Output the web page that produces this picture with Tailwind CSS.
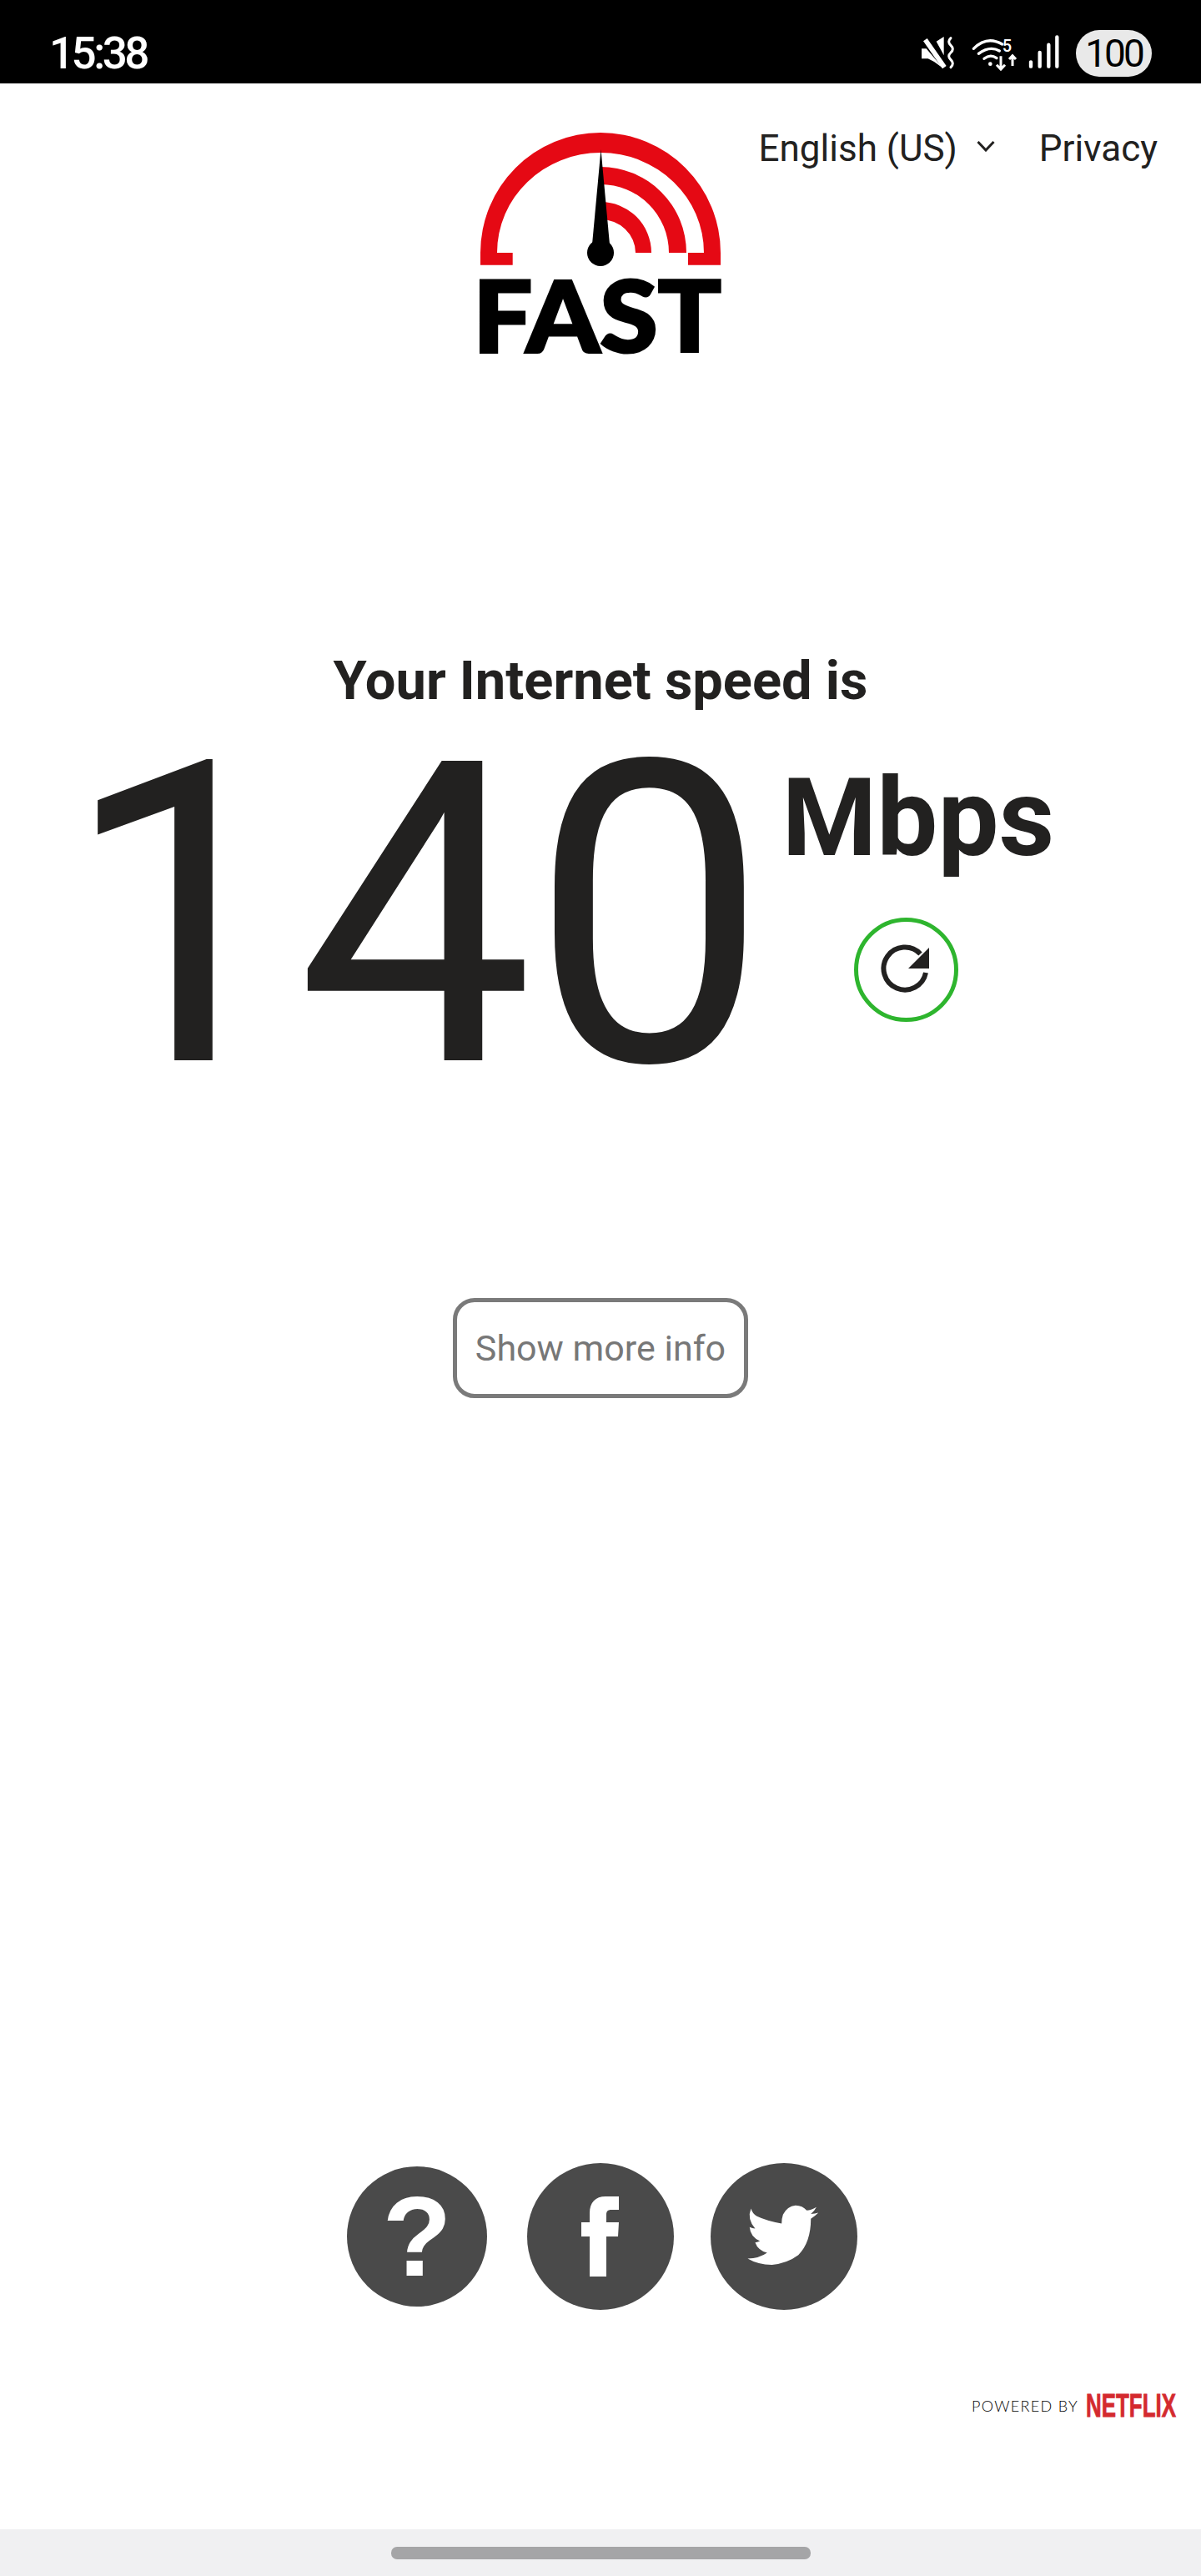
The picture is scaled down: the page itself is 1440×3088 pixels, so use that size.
<!doctype html>
<html lang="en">
<head>
<meta charset="utf-8">
<title>Fast.com</title>
<script src="https://cdn.jsdelivr.net/npm/@tailwindcss/browser@4"></script>
</head>
<body class="bg-white font-['Roboto',sans-serif] text-[#222120]">
<div class="flex h-[3088px] w-[1440px] flex-col overflow-hidden">
  <!-- status bar -->
  <div class="flex h-[100px] items-center justify-between bg-black pl-[59px] pr-[59px] pt-[28px] text-white">
    <span class="text-[53px] font-medium leading-none tracking-[-3.5px]">15:38</span>
    <div class="flex items-center gap-[10px]">
      <svg width="190" height="70" viewBox="0 0 570 210" fill="none">
        <path d="M98 62 L125 45 V112 Z M45 88 H62 L122 158 L90 135 L68 124 H45 Z" fill="#fff"/>
        <path d="M58 56 L127 155" stroke="#fff" stroke-width="17"/>
        <path d="M150 50 q-14 13 0 26 q14 13 0 26 q-14 13 0 26 q14 13 0 27" stroke="#fff" stroke-width="9" stroke-linecap="round"/>
        <path d="M232 88 Q280 40 335 72 M250 106 Q290 76 325 96 M270 124 Q292 106 315 122" stroke="#fff" stroke-width="10" stroke-linecap="round"/>
        <circle cx="292" cy="143" r="7" fill="#fff"/>
        <text x="335" y="98" fill="#fff" font-size="60" font-weight="500">5</text>
        <path d="M330 115 V160 M315 146 L330 162 L345 146 M372 150 V115 M360 126 L372 113 L384 126" stroke="#fff" stroke-width="9"/>
        <path d="M438 136 V152 M470 102 V152 M502 74 V152 M532 46 V152" stroke="#fff" stroke-width="13" stroke-linecap="round"/>
      </svg>
      <div class="flex h-[56px] w-[91px] items-center justify-center rounded-full bg-[#e9e9e9] text-[46px] leading-none tracking-[-3px] text-black">100</div>
    </div>
  </div>

  <!-- header -->
  <div class="grid grid-cols-[1fr_320px_1fr] items-start">
    <div></div>
    <svg width="320" height="290" viewBox="0 0 320 290" class="mt-[50px] overflow-visible">
      <path fill="#e50914" d="M16 167.700 V153 A144 144 0 0 1 304 153 V167.700 H265 V153 H284 A124 120 0 0 0 36 153 H54.700 V167.700 Z"/>
      <path fill="#e50914" d="M160 50 A103 103 0 0 1 263 153 H242 A82 82 0 0 0 160 71 Z"/>
      <path fill="#e50914" d="M160 92 A61 61 0 0 1 221 153 H202 A42 40 0 0 0 160 113 Z"/>
      <path fill="#000" d="M160.500 29 L171 143 H150 Z"/>
      <circle cx="160" cy="153" r="16" fill="#000"/>
      <text x="7" y="272" textLength="298" lengthAdjust="spacingAndGlyphs" font-family="Lato" font-weight="900" font-size="118" fill="#000" stroke="#000" stroke-width="3">FAST</text>
    </svg>
    <div class="flex items-center justify-end pr-[52px] pt-[38px] text-[44px] leading-[80px]">
      <span>English (US)</span>
      <svg width="22" height="14" viewBox="0 0 22 14" fill="none" class="mb-[6px] ml-[23px]"><path d="M1.500 2 L11 12 L20.500 2" stroke="#222120" stroke-width="3"/></svg>
      <span class="ml-[53px]">Privacy</span>
    </div>
  </div>

  <!-- result -->
  <div class="mt-[336px] text-center text-[65px] font-bold leading-[80px]">Your Internet speed is</div>
  <div class="mt-[32px] flex items-start pl-[75px]">
    <div class="text-[505px] font-normal leading-[420px] tracking-[-3px]">140</div>
    <div class="ml-[20px] flex flex-col items-center">
      <div class="mt-[18px] text-[130px] font-bold leading-[150px]">Mbps</div>
      <button class="mr-[28px] mt-[44px] flex h-[125px] w-[125px] items-center justify-center rounded-full border-[5px] border-[#2eb52e]">
        <svg width="62" height="62" viewBox="0 0 62 62" fill="none">
          <path d="M47.500 11.500 A25.500 25.500 0 1 0 54 34" stroke="#222120" stroke-width="6"/>
          <path d="M58 4 V29 H33 Z" fill="#222120"/>
        </svg>
      </button>
    </div>
  </div>

  <!-- more info -->
  <button class="mx-auto mt-[248px] flex h-[120px] w-[354px] items-center justify-center rounded-[26px] border-[5px] border-[#7a7a7a] text-[43px] text-[#777]">Show more info</button>

  <!-- share -->
  <div class="mt-auto flex items-center justify-center pl-[4px]">
    <div class="flex h-[168px] w-[168px] items-center justify-center rounded-full bg-[#4a4a4a] font-['Liberation_Sans',sans-serif] text-[136px] font-bold leading-none text-white">?</div>
    <div class="ml-[48px] flex h-[176px] w-[176px] items-center justify-center rounded-full bg-[#4a4a4a]">
      <svg width="46" height="96" viewBox="0 0 46 96"><path fill="#fff" d="M45 0 V16 H36 C31.500 16 30 18 30 22 V31 H45 L44 48 H30 V96 H10 V48 H0 V31 H10 V20 C10 7 17 0 29 0 Z"/></svg>
    </div>
    <div class="ml-[44px] flex h-[176px] w-[176px] items-center justify-center rounded-full bg-[#4a4a4a]">
      <svg width="176" height="176" viewBox="5 5 527 527"><path fill="#fff" d="M385 163 Q365 175 350 175 Q335 157 310 157 Q280 160 265 190 Q260 205 260 222 Q205 212 170 195 Q155 185 150 168 Q135 205 165 240 Q155 240 145 235 Q148 270 182 285 Q175 288 165 290 Q175 318 208 327 Q180 347 138 348 Q175 370 225 370 Q280 365 320 335 Q365 290 365 205 Q380 195 392 183 Q380 187 365 188 Q378 177 385 163 Z"/></svg>
    </div>
  </div>

  <!-- netflix -->
  <div class="mt-[100px] flex items-center justify-end gap-[9px] pr-[30px]">
    <span class="font-['Lato',sans-serif] text-[18px] font-light leading-none tracking-[1.3px] text-black">POWERED BY</span>
    <svg width="108" height="30" viewBox="0 0 108 30" class="overflow-visible"><text x="0" y="28" textLength="108" lengthAdjust="spacingAndGlyphs" font-family="Liberation Sans" font-weight="700" font-size="39" fill="#d42a2e" stroke="#d42a2e" stroke-width="0.800">NETFLIX</text></svg>
  </div>

  <!-- nav bar -->
  <div class="mt-[133px] flex h-[56px] shrink-0 justify-center bg-[#f0f0f2] pt-[21px]">
    <div class="h-[15px] w-[503px] rounded-[7px] bg-[#a5a5a7]"></div>
  </div>
</div>
</body>
</html>
